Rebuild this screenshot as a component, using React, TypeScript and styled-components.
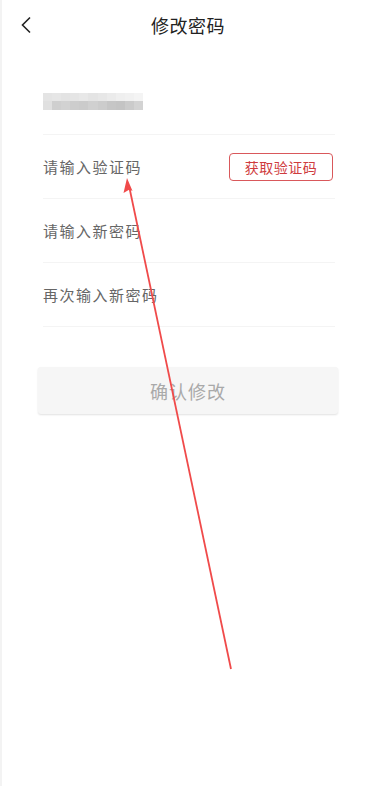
import styled, { createGlobalStyle } from 'styled-components'

const GlobalStyle = createGlobalStyle`
    html, body {
        margin: 0;
        padding: 0;
        background: #fff;
    }
    body {
        font-family: "Noto Sans CJK SC", "Noto Sans", sans-serif;
    }
`

const Page = styled.div`
    position: relative;
    width: 374px;
    height: 786px;
    box-sizing: border-box;
    border-left: 2px solid #f3f3f3;
    background: #fff;
    overflow: hidden;
`

const Header = styled.div`
    height: 50px;
    display: flex;
    align-items: center;
    justify-content: center;
    position: relative;
`

const BackBtn = styled.div`
    position: absolute;
    left: 14px;
    top: 14px;
    width: 20px;
    height: 22px;
    display: flex;
    align-items: center;
    justify-content: center;
`

const Title = styled.h1`
    margin: 0;
    font-size: 18px;
    font-weight: 400;
    color: #222;
    letter-spacing: 0.5px;
`

const Form = styled.div`
    padding: 35px 39px 0 41px;
`

const PhoneRow = styled.div`
    height: 50px;
    display: flex;
    align-items: flex-start;
    padding-top: 8px;
    box-sizing: border-box;
    border-bottom: 1px solid #f4f4f4;
`

const Blur = styled.div`
    width: 100px;
    display: grid;
    grid-template-columns: repeat(11, 1fr);
    grid-template-rows: 8px 9px;
`

const Pix = styled.div<{ $c: string }>`
    background: ${p => p.$c};
`

const Row = styled.div`
    height: 64px;
    display: flex;
    align-items: center;
    justify-content: space-between;
    border-bottom: 1px solid #f4f4f4;
    box-sizing: border-box;
`

const Placeholder = styled.span`
    font-size: 15px;
    color: #666;
    letter-spacing: 1.5px;
`

const CodeBtn = styled.button`
    width: 104px;
    height: 28px;
    border: 1.5px solid #d9585b;
    border-radius: 4px;
    background: #fff;
    color: #cf3b3e;
    font-family: inherit;
    font-size: 14px;
    padding: 0;
    letter-spacing: 0.5px;
    margin-right: 2px;
`

const ConfirmWrap = styled.div`
    padding: 40px 36px 0 36px;
`

const Confirm = styled.button`
    width: 100%;
    height: 47px;
    border: none;
    border-radius: 3px;
    background: #f6f6f6;
    box-shadow: 0 1px 2px rgba(0, 0, 0, 0.12);
    color: #a9a9a9;
    font-family: inherit;
    font-size: 18px;
    letter-spacing: 1px;
`

const Overlay = styled.svg`
    position: absolute;
    left: 0;
    top: 0;
    pointer-events: none;
`

const top = ['#e4e4e4', '#e6e6e6', '#e3e3e3', '#e5e5e5', '#e8e8e8', '#e4e4e4', '#e7e7e7', '#ebebeb', '#efefef', '#f1f1f1', '#f4f4f4']
const bottom = ['#e0e0e0', '#cfcfcf', '#d2d2d2', '#cdcdcd', '#cbcbcb', '#d0d0d0', '#cccccc', '#c6c6c6', '#c4c4c4', '#cbcbcb', '#d3d3d3']

const App = () => {
    return (
        <Page>
            <GlobalStyle />
            <Header>
                <BackBtn>
                    <svg width="12" height="18" viewBox="0 0 12 18">
                        <path d="M10 1.5 L2.5 9 L10 16.5" fill="none" stroke="#222" strokeWidth="1.6" />
                    </svg>
                </BackBtn>
                <Title>修改密码</Title>
            </Header>

            <Form>
                <PhoneRow>
                    <Blur>
                        {top.map((c, i) => <Pix key={'t' + i} $c={c} />)}
                        {bottom.map((c, i) => <Pix key={'b' + i} $c={c} />)}
                    </Blur>
                </PhoneRow>
                <Row>
                    <Placeholder>请输入验证码</Placeholder>
                    <CodeBtn>获取验证码</CodeBtn>
                </Row>
                <Row>
                    <Placeholder>请输入新密码</Placeholder>
                </Row>
                <Row>
                    <Placeholder>再次输入新密码</Placeholder>
                </Row>
            </Form>

            <ConfirmWrap>
                <Confirm>确认修改</Confirm>
            </ConfirmWrap>

            <Overlay width="374" height="786" viewBox="0 0 374 786">
                <line x1="229" y1="669" x2="127.5" y2="188" stroke="#f04a4a" strokeWidth="1.8" />
                <path d="M125 178 L130.5 191 L127.5 189.5 L121.5 193 Z" fill="#f04a4a" />
            </Overlay>
        </Page>
    )
}

export default App
